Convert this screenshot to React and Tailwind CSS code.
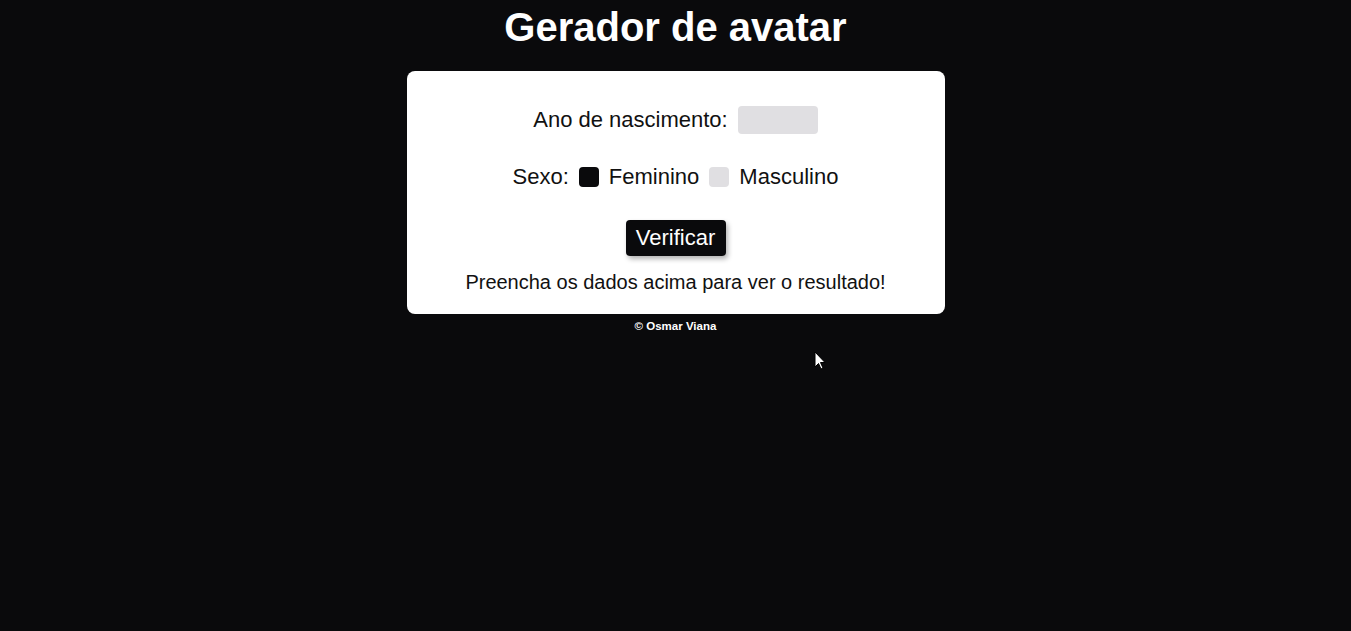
export default function App() {
  return (
    <div className="relative min-h-[631px] w-full bg-[#0a0a0c] font-['Liberation_Sans',Arial,sans-serif] text-[#111]">
      <div className="flex flex-col items-center">
        <h1 className="mt-[4px] text-[40px] font-bold leading-[46px] text-white">Gerador de avatar</h1>
        <div className="mt-[21px] flex w-[538px] flex-col items-center rounded-[8px] bg-white pb-[18px] pt-[35px]">
          <div className="flex items-center text-[22px] leading-[28px]">
            <span>Ano de nascimento:</span>
            <div className="ml-[10px] h-[28px] w-[80px] rounded-[4px] bg-[#e0dfe2]"></div>
          </div>
          <div className="mt-[29px] flex items-center text-[22px] leading-[28px]">
            <span>Sexo:</span>
            <div className="ml-[10px] h-[20px] w-[20px] rounded-[4px] bg-[#0a0a0c]"></div>
            <span className="ml-[10px]">Feminino</span>
            <div className="ml-[10px] h-[20px] w-[20px] rounded-[4px] bg-[#e0dfe2]"></div>
            <span className="ml-[10px]">Masculino</span>
          </div>
          <button className="mt-[29px] h-[36px] w-[100px] rounded-[4px] bg-[#0a0a0c] text-[22px] leading-[36px] text-white shadow-[2px_3px_5px_rgba(0,0,0,0.3)]">Verificar</button>
          <p className="mt-[12px] text-[20px] leading-[28px]">Preencha os dados acima para ver o resultado!</p>
        </div>
        <p className="mt-[4px] text-[11.5px] font-bold leading-[16px] text-white">© Osmar Viana</p>
      </div>
      <svg className="absolute left-[814px] top-[351px]" width="12" height="20" viewBox="0 0 12 20">
        <path d="M1 1 L1 16 L4.5 12.5 L7 18 L9 17 L6.5 11.5 L11 11.5 Z" fill="white" stroke="black" strokeWidth="1" />
      </svg>
    </div>
  );
}
